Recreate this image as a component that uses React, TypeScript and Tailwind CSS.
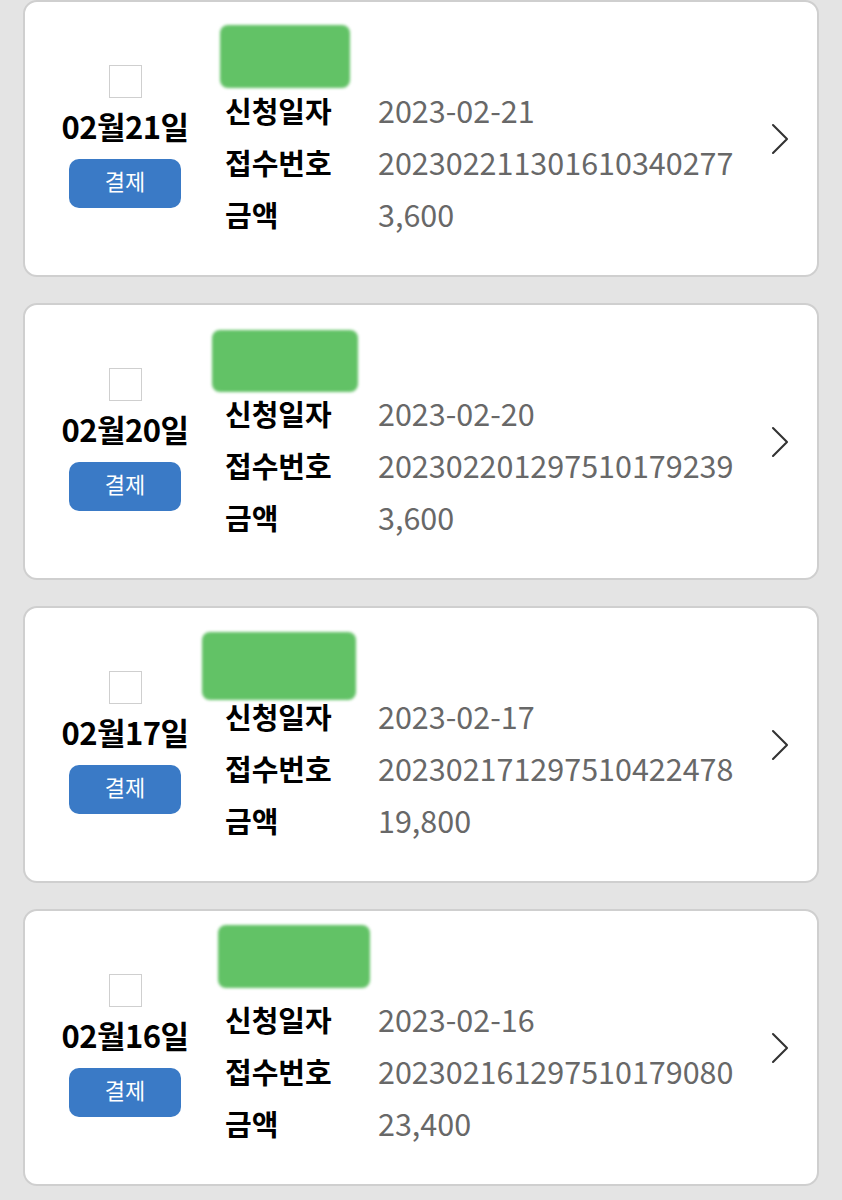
import { ChevronRight } from "lucide-react";

type Item = {
  day: string;
  date: string;
  receipt: string;
  amount: string;
  blob: { x: number; y: number; w: number; h: number };
};

const items: Item[] = [
  { day: "02월21일", date: "2023-02-21", receipt: "202302211301610340277", amount: "3,600", blob: { x: -5, y: -2, w: 130, h: 63 } },
  { day: "02월20일", date: "2023-02-20", receipt: "202302201297510179239", amount: "3,600", blob: { x: -13, y: 0, w: 146, h: 62 } },
  { day: "02월17일", date: "2023-02-17", receipt: "202302171297510422478", amount: "19,800", blob: { x: -23, y: -1, w: 154, h: 68 } },
  { day: "02월16일", date: "2023-02-16", receipt: "202302161297510179080", amount: "23,400", blob: { x: -7, y: -11, w: 152, h: 63 } },
];

const font = { fontFamily: '"Noto Sans CJK KR", "Noto Sans", sans-serif' };

function PaymentCard({ item }: { item: Item }) {
  return (
    <div className="relative flex rounded-[14px] border-2 border-[#cfcfcf] bg-white pt-[25px] pb-[34px]">
      <div className="flex w-[200px] flex-col items-center pt-[38px]">
        <div className="h-[33px] w-[33px] border border-[#cfcfcf] bg-white" />
        <div className="mt-[9px] text-[31px] font-bold leading-[38px] tracking-[-0.5px] text-black">
          {item.day}
        </div>
        <button className="mt-[14px] h-[49px] w-[112px] rounded-[10px] bg-[#3a7ac6] pb-[6px] text-[22px] text-white">
          결제
        </button>
      </div>
      <div className="flex flex-col">
        {/* redacted name */}
        <div className="relative h-[58px]">
          <div
            className="absolute rounded-[8px] bg-[#62c266] blur-[1.5px]"
            style={{ left: item.blob.x, top: item.blob.y, width: item.blob.w, height: item.blob.h }}
          />
        </div>
        {[
          ["신청일자", item.date],
          ["접수번호", item.receipt],
          ["금액", item.amount],
        ].map(([label, value]) => (
          <div key={label} className="flex h-[52px] items-center">
            <span className="w-[153px] text-[29px] font-bold text-black">{label}</span>
            <span className="text-[30.5px] text-[#686868]">{value}</span>
          </div>
        ))}
      </div>
      <ChevronRight
        className="absolute right-[9px] top-1/2 -translate-y-1/2 text-[#333333]"
        size={56}
        strokeWidth={0.9}
      />
    </div>
  );
}

export default function App() {
  return (
    <div className="min-h-[1200px] bg-[#e4e4e4] px-[23px] pb-[12px]" style={font}>
      <div className="flex flex-col gap-[26px]">
        {items.map((item) => (
          <PaymentCard key={item.day} item={item} />
        ))}
      </div>
    </div>
  );
}
